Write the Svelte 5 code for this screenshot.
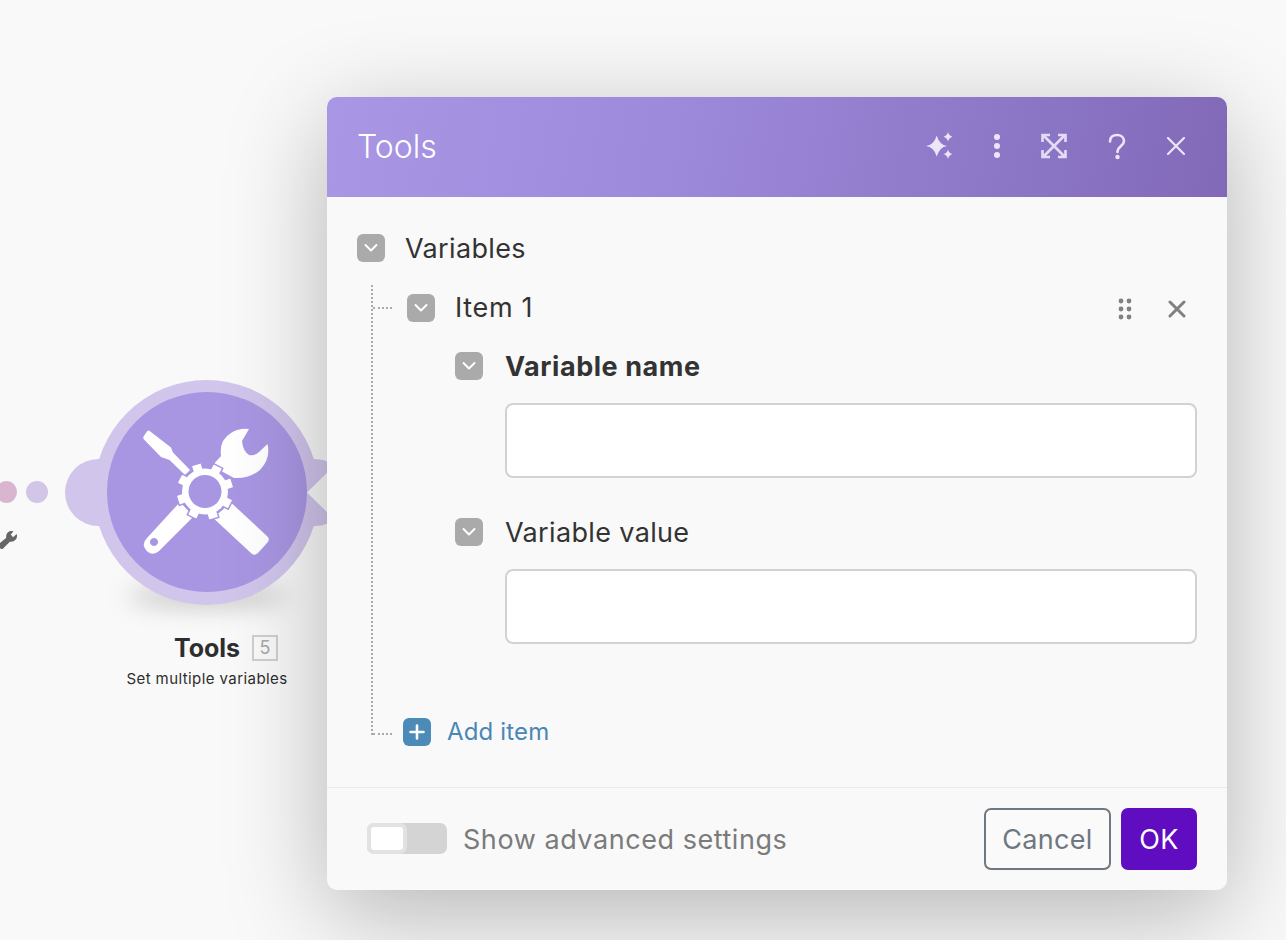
<script>
  const teeth = [0, 45, 90, 135, 180, 225, 270, 315];
</script>

<div class="page">
  <div class="dot pink"></div>
  <div class="dot lilac"></div>
  <svg class="mini" viewBox="0 0 20 20"><path d="M-3 17 L7 8.500 A6 6 0 0 1 15 1.500 L12 5 L14.500 8 L18.500 4.500 A6.500 6.500 0 0 1 11 13 L2 22 Z" fill="#666" /></svg>

  <div class="node">
    <div class="ground"></div>
    <svg class="blob" viewBox="0 0 270 230">
      <circle cx="33.5" cy="112.5" r="33.5" fill="#d1c5ec" />
      <circle cx="250" cy="112.5" r="33.5" fill="#d1c5ec" />
      <circle cx="141.5" cy="112.5" r="112.5" fill="#d1c5ec" />
      <path d="M242 112.5 L270 85 V140 Z" fill="#f9f9f9" />
    </svg>
    <div class="disc"></div>
    <svg class="tools" viewBox="0 0 150 140">
      <g fill="#fff">
        <path d="M19 10.500 L41 27.500 L43 32.500 L60 50 L55 55 L39.500 40 L31 37 L13.500 19 Q12.500 17 14.500 15 L17 11.500 Q18 10 19 10.500 Z" />
        <path d="M119 9 L112 21 Q113 31 119 35 Q125 36 129 32 L137.500 24 Q141 38 130 50 Q119 59 104 58 L82 46 L91 36 Q89 20 101 13 Q109 8 119 9 Z" />
        <path fill-rule="evenodd" d="M50 82 L64 96 L29 131 Q22 137 16 130 Q11 124 17 118 Z M24 118 a4 4 0 1 0 .01 0 Z" />
        <path d="M95 77 L138 117 Q140 120 137 123 L128 133 Q125 136 122 134 L80 95 Z" />
      </g>
      <g class="gear">
        <circle cx="75" cy="71.500" r="24" />
        {#each teeth as t}
          <rect x="70.500" y="43.500" width="9" height="8" transform="rotate({t + 27} 75 71.500)" />
        {/each}
      </g>
      <g fill="#fff">
        <circle cx="75" cy="71.500" r="23" />
        {#each teeth as t}
          <rect x="70.500" y="43.500" width="9" height="8" rx="0.500" transform="rotate({t + 27} 75 71.500)" />
        {/each}
      </g>
      <circle cx="75" cy="71.500" r="16.500" fill="#a996e3" />
    </svg>
  </div>

  <div class="caption">
    <div class="name"><strong>Tools<span class="badge">5</span></strong></div>
    <div class="sub">Set multiple variables</div>
  </div>

  <section class="dialog">
    <header class="head">
      <h1>Tools</h1>
      <div class="actions">
        <svg viewBox="0 0 30 30"><path d="M2 15 Q10 14 12.700 4.500 Q15.500 14 23 15 Q15.500 16 12.700 25.500 Q10 16 2 15 Z M24 1 Q24.800 4.800 28.500 5.700 Q24.800 6.600 24 10.500 Q23.200 6.600 19.500 5.700 Q23.200 4.800 24 1 Z M24 18.500 Q24.800 22.200 28.500 23 Q24.800 24 24 28 Q23.200 24 19.500 23 Q23.200 22.200 24 18.500 Z" fill="#ece6f8" /></svg>
        <svg viewBox="0 0 30 30"><g fill="#ece6f8"><circle cx="15" cy="6" r="3" /><circle cx="15" cy="15" r="3" /><circle cx="15" cy="24" r="3" /></g></svg>
        <svg class="wide" viewBox="0 0 30 30"><path d="M3.500 11V4H11 M19 4h7.500v7 M26.500 19v7H19 M11 26H3.500v-7 M4 4L26 26 M26 4L4 26" fill="none" stroke="#e3dcf4" stroke-width="2.600" /></svg>
        <svg class="help" viewBox="0 0 30 30"><path d="M8 10.500 C8 6 11 4 15 4 C19 4 22 6.500 22 10 C22 15 15.500 15 15.500 21" fill="none" stroke="#ece6f8" stroke-width="2.600" stroke-linecap="round" /><circle cx="15.500" cy="26" r="2.200" fill="#ece6f8" /></svg>
        <svg viewBox="0 0 30 30"><path d="M7 7L23 23M23 7L7 23" fill="none" stroke="#ece6f8" stroke-width="2.200" stroke-linecap="round" /></svg>
      </div>
    </header>

    <div class="body">
      <div class="row">
        <span class="chev"><svg viewBox="0 0 28 28"><path d="M8.500 11L14 16.500L19.500 11" /></svg></span>
        <span class="label">Variables</span>
      </div>

      <div class="tree">
        <div class="row item">
          <span class="chev"><svg viewBox="0 0 28 28"><path d="M8.500 11L14 16.500L19.500 11" /></svg></span>
          <span class="label">Item 1</span>
          <div class="item-tools">
            <svg class="grip" viewBox="0 0 14 22"><g fill="#808080"><circle cx="3" cy="3" r="2.400" /><circle cx="11" cy="3" r="2.400" /><circle cx="3" cy="11" r="2.400" /><circle cx="11" cy="11" r="2.400" /><circle cx="3" cy="19" r="2.400" /><circle cx="11" cy="19" r="2.400" /></g></svg>
            <svg class="del" viewBox="0 0 18 18"><path d="M2 2L16 16M16 2L2 16" stroke="#808080" stroke-width="3" stroke-linecap="round" /></svg>
          </div>
        </div>

        <div class="fields">
          <div class="row fhead">
            <span class="chev"><svg viewBox="0 0 28 28"><path d="M8.500 11L14 16.500L19.500 11" /></svg></span>
            <span class="label bold">Variable name</span>
          </div>
          <input class="field" type="text" />
          <div class="row fhead second">
            <span class="chev"><svg viewBox="0 0 28 28"><path d="M8.500 11L14 16.500L19.500 11" /></svg></span>
            <span class="label">Variable value</span>
          </div>
          <input class="field" type="text" />
        </div>

        <div class="row add">
          <span class="chev blue"><svg viewBox="0 0 28 28"><path class="plus" d="M14 7.500V20.500M7.500 14H20.500" /></svg></span>
          <span class="label link">Add item</span>
        </div>
      </div>
    </div>

    <footer class="foot">
      <div class="toggle"><span class="knob"></span></div>
      <span class="adv">Show advanced settings</span>
      <button class="btn cancel">Cancel</button>
      <button class="btn ok">OK</button>
    </footer>
  </section>
</div>

<style>
  :global(body) {
    margin: 0;
    background: #f9f9f9;
    font-family: Inter, "Liberation Sans", sans-serif;
  }
  .page {
    position: relative;
    width: 1286px;
    height: 940px;
    overflow: hidden;
    background: #f9f9f9;
  }
  .dot {
    position: absolute;
    border-radius: 50%;
  }
  .pink {
    left: -4px;
    top: 481px;
    width: 21px;
    height: 22px;
    background: #d9b6d0;
  }
  .lilac {
    left: 26px;
    top: 481px;
    width: 22px;
    height: 22px;
    background: #d2c5e8;
  }
  .mini {
    position: absolute;
    left: 0;
    top: 529px;
    width: 18px;
    height: 20px;
  }
  .node {
    position: absolute;
    left: 65px;
    top: 380px;
    width: 270px;
    height: 260px;
  }
  .ground {
    position: absolute;
    left: 62px;
    top: 205px;
    width: 160px;
    height: 22px;
    border-radius: 50%;
    background: rgba(0, 0, 0, 0.2);
    filter: blur(12px);
  }
  .blob {
    position: absolute;
    left: 0;
    top: 0;
    width: 270px;
    height: 230px;
  }
  .disc {
    position: absolute;
    left: 42px;
    top: 12px;
    width: 200px;
    height: 200px;
    border-radius: 50%;
    background: #a996e3;
  }
  .tools {
    position: absolute;
    left: 65px;
    top: 40px;
    width: 150px;
    height: 140px;
  }
  .gear {
    fill: #a996e3;
    stroke: #a996e3;
    stroke-width: 3;
  }
  .caption {
    position: absolute;
    left: 107px;
    top: 634px;
    width: 200px;
    text-align: center;
    color: #2e2e2e;
  }
  .name {
    font-size: 25px;
    line-height: 28px;
  }
  .name strong {
    position: relative;
    display: inline-block;
    font-weight: 700;
  }
  .badge {
    position: absolute;
    left: calc(100% + 12px);
    top: 1px;
    box-sizing: border-box;
    width: 26px;
    height: 26px;
    border: 2px solid #cfcfcf;
    font-size: 18px;
    line-height: 22px;
    color: #a8a8a8;
    font-weight: 400;
  }
  .sub {
    margin-top: 8px;
    font-size: 15px;
    line-height: 18px;
    letter-spacing: 0.42px;
    white-space: nowrap;
  }
  .dialog {
    position: absolute;
    left: 327px;
    top: 97px;
    width: 900px;
    height: 793px;
    display: flex;
    flex-direction: column;
    border-radius: 10px;
    background: #f9f9f9;
    box-shadow: 0 24px 100px rgba(0, 0, 0, 0.28);
  }
  .head {
    height: 100px;
    flex: none;
    display: flex;
    align-items: center;
    justify-content: space-between;
    padding: 0 36px 2px 30px;
    box-sizing: border-box;
    border-radius: 10px 10px 0 0;
    background: linear-gradient(100deg, #a996e4 0%, #9f8bdc 35%, #8a74c4 80%, #8269b8 100%);
  }
  h1 {
    margin: 0;
    font-size: 32px;
    font-weight: 300;
    color: #fff;
  }
  .actions {
    display: flex;
    align-items: center;
    gap: 28px;
  }
  .actions svg {
    width: 30px;
    height: 30px;
    display: block;
  }
  .actions .wide {
    margin: 0 5px 0 -1px;
  }
  .actions .help {
    margin-right: 1px;
  }
  .body {
    flex: 1;
    padding: 37px 30px 0;
    box-sizing: border-box;
  }
  .row {
    display: flex;
    align-items: center;
    gap: 20px;
    height: 28px;
  }
  .fhead {
    gap: 22px;
  }
  .chev {
    flex: none;
    width: 28px;
    height: 28px;
    border-radius: 6px;
    background: #aaaaaa;
  }
  .chev svg {
    display: block;
    width: 28px;
    height: 28px;
  }
  .chev path {
    fill: none;
    stroke: #fff;
    stroke-width: 2;
    stroke-linecap: round;
    stroke-linejoin: round;
  }
  .chev path.plus {
    stroke-width: 2.600;
  }
  .label {
    font-size: 27px;
    color: #333;
    line-height: 28px;
    letter-spacing: 0.35px;
    white-space: nowrap;
  }
  .body > .row .label,
  .fhead .label {
    padding-top: 2px;
  }
  .bold {
    font-weight: 700;
    letter-spacing: 0.55px;
  }
  .tree {
    position: relative;
    margin: 23px 0 0 14px;
    padding-left: 34px;
    height: 450px;
    box-sizing: border-box;
    border-left: 2px dotted #aaaaaa;
  }
  .tree::before,
  .tree::after {
    content: "";
    position: absolute;
    left: 0;
    width: 19px;
    border-top: 2px dotted #aaaaaa;
  }
  .tree::before {
    top: 22px;
  }
  .tree::after {
    bottom: 0;
  }
  .item {
    padding-top: 9px;
  }
  .item .label {
    letter-spacing: 0.65px;
    padding-bottom: 1px;
  }
  .item-tools {
    margin: 2px 0 0 auto;
    display: flex;
    align-items: center;
    gap: 36px;
    padding-right: 11px;
  }
  .grip {
    width: 14px;
    height: 22px;
  }
  .del {
    width: 18px;
    height: 18px;
  }
  .fields {
    margin: 30px 0 0 48px;
  }
  .field {
    display: block;
    box-sizing: border-box;
    width: 692px;
    height: 75px;
    margin: 23px 0 0 50px;
    border: 2px solid #d2d2d2;
    border-radius: 8px;
    background: #fff;
    outline: none;
  }
  .second {
    margin-top: 40px;
  }
  .add {
    margin: 74px 0 0 -4px;
    gap: 16px;
  }
  .blue {
    background: #4c8ab8;
  }
  .link {
    color: #4a87b5;
    font-size: 24px;
    letter-spacing: 0.15px;
  }
  .foot {
    height: 103px;
    flex: none;
    box-sizing: border-box;
    display: flex;
    align-items: center;
    padding: 0 30px 0 40px;
    border-top: 1px solid #ececec;
  }
  .toggle {
    width: 80px;
    height: 31px;
    border-radius: 7px;
    background: #d4d4d4;
    position: relative;
    top: -1px;
  }
  .knob {
    display: block;
    box-sizing: border-box;
    width: 40px;
    height: 31px;
    border: 4px solid #e2e2e2;
    border-radius: 7px;
    background: #fff;
  }
  .adv {
    margin-left: 16px;
    font-size: 27px;
    letter-spacing: 0.55px;
    color: #7b7b7b;
  }
  .btn {
    height: 62px;
    box-sizing: border-box;
    border-radius: 7px;
    font-family: inherit;
    font-size: 27px;
  }
  .cancel {
    margin-left: auto;
    width: 127px;
    padding: 0;
    border: 2px solid #6f7780;
    background: #fafafa;
    color: #6f7780;
    letter-spacing: 0.3px;
  }
  .ok {
    margin-left: 10px;
    width: 76px;
    padding: 0;
    border: none;
    background: #600cc0;
    color: #fff;
    letter-spacing: 0.4px;
  }
</style>
